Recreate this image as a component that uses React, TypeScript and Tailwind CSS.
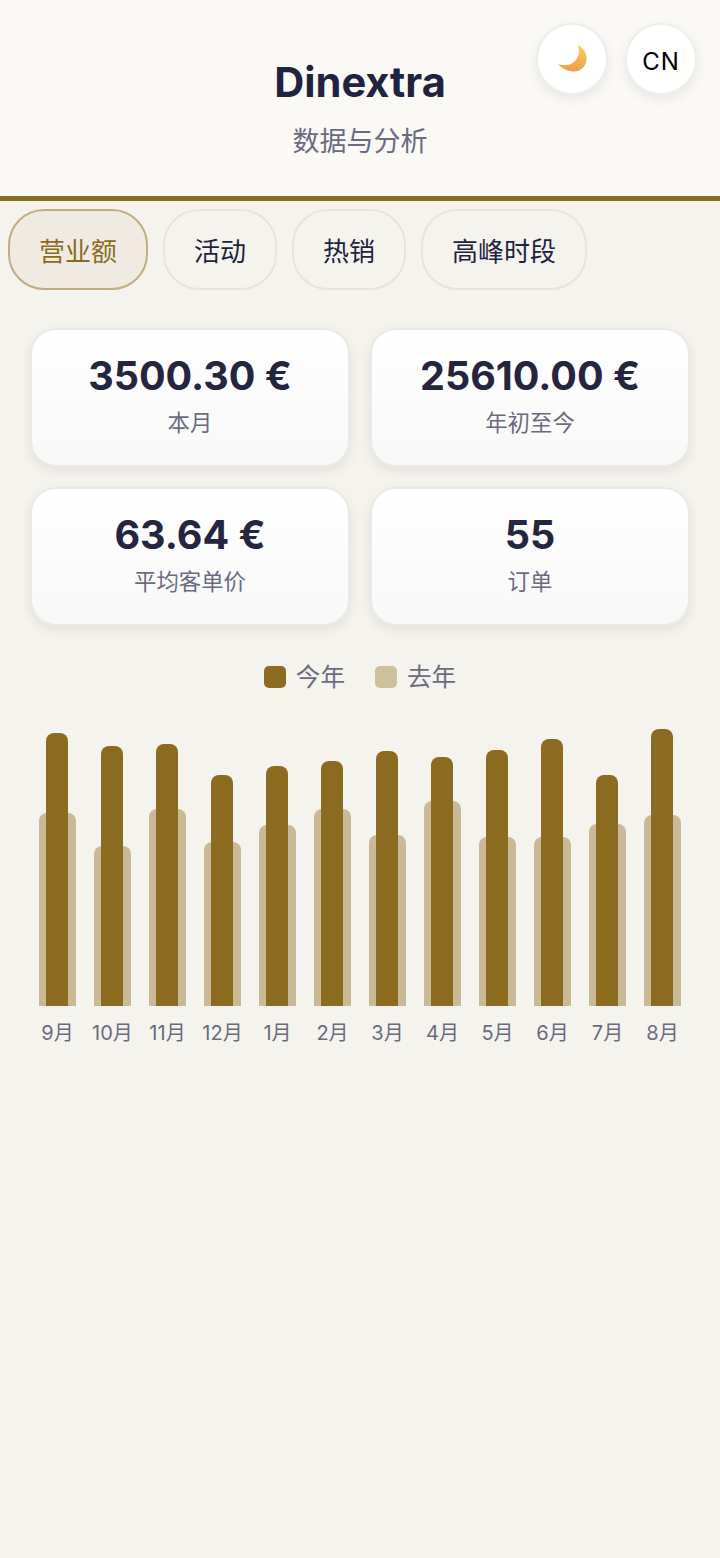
const fontStack = "font-['Inter','Noto_Sans_CJK_SC',sans-serif]";

const tabs = [
  { label: "营业额", width: "w-[140px]", active: true },
  { label: "活动", width: "w-[114px]", active: false },
  { label: "热销", width: "w-[114px]", active: false },
  { label: "高峰时段", width: "w-[166px]", active: false },
];

const stats = [
  { value: "3500.30 €", label: "本月" },
  { value: "25610.00 €", label: "年初至今" },
  { value: "63.64 €", label: "平均客单价" },
  { value: "55", label: "订单" },
];

const months = [
  { name: "9月", now: 273, last: 193 },
  { name: "10月", now: 260, last: 160 },
  { name: "11月", now: 262, last: 197 },
  { name: "12月", now: 231, last: 164 },
  { name: "1月", now: 240, last: 181 },
  { name: "2月", now: 245, last: 197 },
  { name: "3月", now: 255, last: 171 },
  { name: "4月", now: 249, last: 205 },
  { name: "5月", now: 256, last: 169 },
  { name: "6月", now: 267, last: 169 },
  { name: "7月", now: 231, last: 182 },
  { name: "8月", now: 277, last: 191 },
];

const Moon = () => (
  <svg width="32" height="32" viewBox="0 0 32 32">
    <defs>
      <linearGradient id="moon" x1="0.7" y1="0" x2="0.3" y2="1">
        <stop offset="0" stopColor="#f7c766" />
        <stop offset="1" stopColor="#f09a45" />
      </linearGradient>
    </defs>
    <path
      d="M22 1.500 C27.500 6 31 10 30.500 16.500 C30 24 24 29 17 28.500 C11 28 6 25.500 2 21 C8 23.500 14 22.500 18.500 18.500 C23 14.500 24 7.500 22 1.500 Z"
      fill="url(#moon)"
    />
  </svg>
);

const App = () => {
  return (
    <div className={`min-h-[1558px] bg-[#f4f3ed] ${fontStack}`}>
      {/* Header */}
      <header className="relative h-[201px] bg-[#faf9f5] border-b-[5px] border-[#8b6b1f] pt-[55px] text-center">
        <h1 className="text-[41.600px] leading-[54px] font-bold text-[#1f2340]">Dinextra</h1>
        <p className="mt-[13px] text-[27px] leading-[40px] text-[#6b6b80]">数据与分析</p>
        <div className="absolute top-[23px] right-[23px] flex gap-[17px]">
          <button className="w-[72px] h-[72px] rounded-full bg-white border-2 border-[#eeeeec] shadow-[0_4px_12px_rgba(0,0,0,0.08)] flex items-center justify-center">
            <Moon />
          </button>
          <button className="w-[72px] h-[72px] rounded-full bg-white border-2 border-[#eeeeec] shadow-[0_4px_12px_rgba(0,0,0,0.08)] flex items-center justify-center pt-[6px] text-[24px] font-normal tracking-[1px] text-black">
            CN
          </button>
        </div>
      </header>

      {/* Tabs */}
      <nav className="flex gap-[15px] pl-2 pt-2">
        {tabs.map((tab) => (
          <button
            key={tab.label}
            className={
              tab.active
                ? `${tab.width} h-[81px] pt-[3px] rounded-[36px] border-2 border-[#c2ad80] bg-[#efebe3] text-[26px] text-[#8b6b1f]`
                : `${tab.width} h-[81px] pt-[3px] rounded-[36px] border-2 border-[#e8e4dc] bg-[#f4f3ed] text-[26px] text-[#1f2340]`
            }
          >
            {tab.label}
          </button>
        ))}
      </nav>

      {/* Stat cards */}
      <section className="grid grid-cols-2 gap-x-5 gap-y-5 px-[30px] pt-[38px]">
        {stats.map((stat) => (
          <div
            key={stat.label}
            className="h-[139px] rounded-[26px] border-2 border-[#ebe9e5] bg-gradient-to-b from-white to-[#f8f8f8] shadow-[0_4px_12px_rgba(0,0,0,0.08)] pt-[21px] text-center"
          >
            <div className="text-[39.500px] leading-[50px] font-bold text-[#25253f]">{stat.value}</div>
            <div className="mt-[6px] text-[22.400px] leading-[32px] text-[#6b6b80]">{stat.label}</div>
          </div>
        ))}
      </section>

      {/* Legend */}
      <div className="flex justify-center items-center gap-[30px] pt-[35px]">
        <div className="flex items-center gap-[10px]">
          <span className="w-[22px] h-[22px] rounded-[5px] bg-[#8b6b1f]" />
          <span className="text-[24.600px] leading-[32px] text-[#6b6b80]">今年</span>
        </div>
        <div className="flex items-center gap-[10px]">
          <span className="w-[22px] h-[22px] rounded-[5px] bg-[#cfc09c]" />
          <span className="text-[24.600px] leading-[32px] text-[#6b6b80]">去年</span>
        </div>
      </div>

      {/* Chart */}
      <section className="flex px-[30px] pt-[36px]">
        {months.map((m) => (
          <div key={m.name} className="flex-1 flex flex-col items-center">
            <div className="relative w-[37px] h-[277px]">
              <div
                className="absolute bottom-0 left-0 w-full rounded-t-[8px] bg-[#c9b996]"
                style={{ height: m.last }}
              />
              <div
                className="absolute bottom-0 left-[7px] w-[22px] rounded-t-[8px] bg-[#8b6b1f]"
                style={{ height: m.now }}
              />
            </div>
            <span className="mt-[12px] text-[20px] leading-[30px] text-[#6b6b80] whitespace-nowrap">{m.name}</span>
          </div>
        ))}
      </section>
    </div>
  );
};

export default App;
